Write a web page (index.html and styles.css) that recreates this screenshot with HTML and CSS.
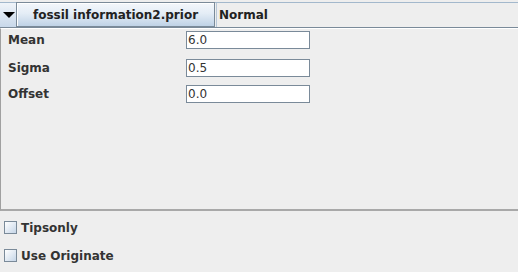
FILE: index.html
```html
<!DOCTYPE html>
<html>
<head>
<meta charset="utf-8">
<link rel="stylesheet" href="styles.css">
</head>
<body>
<div class="app">
  <div class="header">
    <div class="toggle"><span class="tri"></span></div>
    <div class="prior-btn">fossil information2.prior</div>
    <div class="combo">Normal</div>
  </div>
  <div class="panel">
    <div class="row r1"><span class="label">Mean</span><div class="field">6.0</div></div>
    <div class="row r2"><span class="label">Sigma</span><div class="field">0.5</div></div>
    <div class="row r3"><span class="label">Offset</span><div class="field">0.0</div></div>
  </div>
  <div class="checks">
    <div class="check c1"><span class="box"></span><span class="clabel">Tipsonly</span></div>
    <div class="check c2"><span class="box"></span><span class="clabel">Use Originate</span></div>
  </div>
</div>
</body>
</html>
```
FILE: styles.css
```css
html, body {
  margin: 0;
  padding: 0;
  background: #eeeeee;
  width: 518px;
  height: 272px;
  overflow: hidden;
}
.app {
  font-family: "DejaVu Sans", sans-serif;
  font-size: 12px;
  color: #333333;
}
.header {
  margin-top: 2px;
  height: 24px;
  display: flex;
  border-top: 1px solid #a3b8cc;
  border-bottom: 1px solid #7a8a99;
}
.toggle {
  width: 16px;
  background: linear-gradient(#f0f4f9, #c8d8ea);
  display: flex;
  align-items: center;
  justify-content: flex-start;
}
.tri {
  margin-left: 3px;
  width: 0;
  height: 0;
  border-left: 6px solid transparent;
  border-right: 6px solid transparent;
  border-top: 6px solid #000000;
}
.prior-btn {
  box-sizing: border-box;
  width: 199px;
  margin-top: -1px;
  height: 25px;
  border: 1px solid #7a8a99;
  box-shadow: inset 1px 1px 0 #ffffff;
  background: linear-gradient(#f4f7fb, #e4edf6 45%, #bfd2e6);
  font-weight: bold;
  display: flex;
  align-items: center;
  justify-content: center;
  color: #222222;
}
.combo {
  flex: 1;
  margin-left: 1px;
  border-left: 1px solid #b8c8d8;
  background: #eeeeee;
  font-weight: bold;
  color: #222222;
  display: flex;
  align-items: center;
  padding-left: 2px;
}
.panel {
  box-sizing: border-box;
  height: 183px;
  border-top: 1px solid #ffffff;
  border-left: 1px solid #a0a0a0;
  border-bottom: 2px solid #a8a8a8;
  display: flex;
  flex-direction: column;
}
.row {
  display: flex;
  align-items: center;
  height: 18px;
}
.r1 { margin-top: 2px; }
.r2 { margin-top: 10px; }
.r3 { margin-top: 8px; }
.label {
  width: 185px;
  padding-left: 7px;
  box-sizing: border-box;
  font-weight: bold;
  color: #333333;
}
.field {
  box-sizing: border-box;
  width: 124px;
  height: 18px;
  border: 1px solid #7a8a99;
  background: #ffffff;
  padding-left: 1px;
  display: flex;
  align-items: center;
  color: #333333;
}
.checks {
  display: flex;
  flex-direction: column;
}
.check {
  display: flex;
  align-items: center;
  height: 13px;
  padding-left: 4px;
}
.c1 { margin-top: 10px; }
.c2 { margin-top: 15px; }
.box {
  box-sizing: border-box;
  width: 13px;
  height: 13px;
  border: 1px solid #7a8a99;
  background: linear-gradient(135deg, #ffffff, #c6d6e8);
}
.clabel {
  margin-left: 4px;
  font-weight: bold;
  color: #333333;
}
```
